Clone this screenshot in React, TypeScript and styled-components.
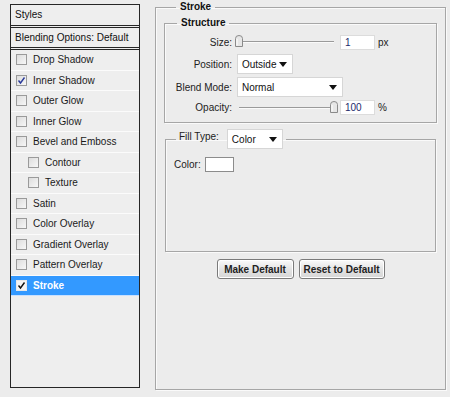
import React from 'react';
import styled, { createGlobalStyle } from 'styled-components';

const GlobalStyle = createGlobalStyle`
  html, body {
    margin: 0;
    padding: 0;
    background: #ececec;
  }
  body {
    font-family: 'Liberation Sans', Arial, sans-serif;
    font-size: 10px;
    color: #1e1e1e;
  }
`;

interface IEffect {
  name: string;
  checked?: boolean;
  indent?: boolean;
  selected?: boolean;
}

const effects: IEffect[] = [
  { name: 'Drop Shadow' },
  { name: 'Inner Shadow', checked: true },
  { name: 'Outer Glow' },
  { name: 'Inner Glow' },
  { name: 'Bevel and Emboss' },
  { name: 'Contour', indent: true },
  { name: 'Texture', indent: true },
  { name: 'Satin' },
  { name: 'Color Overlay' },
  { name: 'Gradient Overlay' },
  { name: 'Pattern Overlay' },
  { name: 'Stroke', checked: true, selected: true }
];

const CheckMark = ({ color }: { color: string }) => (
  <svg width="9" height="9" viewBox="0 0 9 9">
    <path d="M1.5 4.5 L3.5 7 L7.5 1.5" fill="none" stroke={color} strokeWidth="1.4" />
  </svg>
);

const Arrow = () => (
  <svg width="8" height="5" viewBox="0 0 8 5">
    <path d="M0 0 H8 L4 5 Z" fill="#111" />
  </svg>
);

const Thumb = () => (
  <svg width="8" height="12" viewBox="0 0 8 12">
    <path
      d="M0.5 3.5 Q0.5 0.5 4 0.5 Q7.5 0.5 7.5 3.5 V11.5 H0.5 Z"
      fill="#e6e6e6"
      stroke="#8a8a8a"
    />
    <path d="M2 4 V10.5" stroke="#fff" />
  </svg>
);

const Slider = ({ value }: { value: number }) => (
  <SliderTrack>
    <ThumbHolder style={{ left: `${value}%` }}>
      <Thumb />
    </ThumbHolder>
  </SliderTrack>
);

const App = () => {
  return (
    <Page>
      <GlobalStyle />
      <StylesPanel>
        <HeaderRow $height={20}>Styles</HeaderRow>
        <HeaderRow $height={19}>Blending Options: Default</HeaderRow>
        <EffectList>
          {effects.map(item => (
            <EffectRow key={item.name} $indent={item.indent} $selected={item.selected}>
              <CheckBox $selected={item.selected}>
                {item.checked && <CheckMark color={item.selected ? '#111' : '#2a3a9a'} />}
              </CheckBox>
              {item.name}
            </EffectRow>
          ))}
        </EffectList>
      </StylesPanel>

      <Group>
        <Legend>Stroke</Legend>
        <SubGroup>
          <Legend>Structure</Legend>
          <FormGrid>
            <Label>Size:</Label>
            <Control>
              <Slider value={0} />
              <NumberBox>1</NumberBox>
              <Unit>px</Unit>
            </Control>
            <Label>Position:</Label>
            <Control>
              <Select $width={56}>
                Outside
                <Arrow />
              </Select>
            </Control>
            <Label>Blend Mode:</Label>
            <Control>
              <Select $width={106}>
                Normal
                <Arrow />
              </Select>
            </Control>
            <Label>Opacity:</Label>
            <Control>
              <Slider value={100} />
              <NumberBox>100</NumberBox>
              <Unit>%</Unit>
            </Control>
          </FormGrid>
        </SubGroup>

        <FillGroup>
          <FillLegend>
            <span>Fill Type:</span>
            <Select $width={56}>
              Color
              <Arrow />
            </Select>
          </FillLegend>
          <FillBody>
            <span>Color:</span>
            <Swatch />
          </FillBody>
        </FillGroup>

        <ButtonRow>
          <Button $width={77}>Make Default</Button>
          <Button $width={86}>Reset to Default</Button>
        </ButtonRow>
      </Group>
    </Page>
  );
};

export default App;

const Page = styled.div`
  display: flex;
  align-items: flex-start;
  padding-left: 10px;
  column-gap: 15px;
  width: 450px;
  height: 397px;
  box-sizing: border-box;
`;

const StylesPanel = styled.div`
  margin-top: 4px;
  width: 130px;
  height: 384px;
  box-sizing: border-box;
  border: 1px solid #262626;
  background: #eeeeee;
  display: flex;
  flex-direction: column;
`;

const HeaderRow = styled.div<{ $height: number }>`
  height: ${p => p.$height}px;
  line-height: ${p => p.$height}px;
  padding-left: 4px;
  border-bottom: 3px double #262626;
  font-size: 10px;
  color: #111;
`;

const EffectList = styled.div`
  display: flex;
  flex-direction: column;
  flex: 1;
`;

const EffectRow = styled.div<{ $indent?: boolean; $selected?: boolean }>`
  height: 19.5px;
  display: flex;
  align-items: center;
  column-gap: 6px;
  padding-left: ${p => (p.$indent ? '17px' : '5px')};
  border-bottom: 1px solid ${p => (p.$selected ? '#c8e0ff' : '#fbfbfb')};
  background: ${p => (p.$selected ? '#3399ff' : 'transparent')};
  color: ${p => (p.$selected ? '#ffffff' : '#1a1a1a')};
  font-weight: ${p => (p.$selected ? 'bold' : 'normal')};
  font-size: 10px;
`;

const CheckBox = styled.span<{ $selected?: boolean }>`
  width: 11px;
  height: 11px;
  box-sizing: border-box;
  border: 1px solid ${p => (p.$selected ? '#e8e8e8' : '#9a9a9a')};
  background: ${p =>
    p.$selected ? '#f4f4f4' : 'linear-gradient(135deg, #dcdcdc, #f7f7f7)'};
  display: flex;
  align-items: center;
  justify-content: center;
`;

const Group = styled.fieldset`
  margin: 0;
  padding: 2px 8px 110px 8px;
  width: 291px;
  box-sizing: border-box;
  border: 1px solid #a6a6a6;
  box-shadow: inset 1px 1px 0 #fafafa, 1px 1px 0 #fafafa;
  min-inline-size: 0;
`;

const Legend = styled.legend`
  padding: 0 4px;
  margin-left: 12px;
  line-height: 14px;
  font-weight: bold;
  font-size: 10px;
  color: #111;
`;

const SubGroup = styled.fieldset`
  margin: 0;
  padding: 3px 0 4px 0;
  border: 1px solid #a6a6a6;
  box-shadow: inset 1px 1px 0 #fafafa, 1px 1px 0 #fafafa;
  min-inline-size: 0;
`;

const FormGrid = styled.div`
  display: grid;
  grid-template-columns: 67px 1fr;
  grid-template-rows: 18px 20px 20px 18px;
  row-gap: 3px;
  column-gap: 5px;
  & > :nth-child(7),
  & > :nth-child(8) {
    margin-top: -3px;
  }
`;

const Label = styled.span`
  text-align: right;
  align-self: center;
  color: #222;
  font-size: 10px;
`;

const Control = styled.div`
  display: flex;
  align-items: center;
`;

const SliderTrack = styled.div`
  position: relative;
  width: 95px;
  height: 1px;
  margin-left: 2px;
  background: #9a9a9a;
  border-bottom: 1px solid #fafafa;
`;

const ThumbHolder = styled.div`
  position: absolute;
  top: -6px;
  margin-left: -4px;
  line-height: 0;
`;

const NumberBox = styled.div`
  margin-left: 6px;
  width: 35px;
  height: 15px;
  box-sizing: border-box;
  background: #fff;
  border: 1px solid #dcdcdc;
  padding-left: 4px;
  line-height: 13px;
  color: #1d2a6b;
  font-size: 10px;
`;

const Unit = styled.span`
  margin-left: 3px;
  color: #222;
`;

const Select = styled.div<{ $width: number }>`
  width: ${p => p.$width}px;
  height: 20px;
  box-sizing: border-box;
  background: #fff;
  border: 1px solid #d6d6d6;
  display: flex;
  align-items: center;
  justify-content: space-between;
  padding: 0 5px 0 4px;
  font-size: 10px;
  color: #111;
  font-weight: normal;
`;

const FillGroup = styled.fieldset`
  margin: 6px 1px 0 1px;
  padding: 0;
  border: 1px solid #a6a6a6;
  box-shadow: inset 1px 1px 0 #fafafa, 1px 1px 0 #fafafa;
  min-inline-size: 0;
`;

const FillLegend = styled.legend`
  margin-left: 10px;
  padding: 0 3px;
  display: flex;
  align-items: center;
  column-gap: 8px;
  font-size: 10px;
  color: #222;
  span {
    margin-top: -6px;
  }
`;

const FillBody = styled.div`
  height: 102px;
  box-sizing: border-box;
  padding: 8px 0 0 8px;
  display: flex;
  align-items: flex-start;
  column-gap: 4px;
  color: #222;
  span {
    line-height: 15px;
  }
`;

const Swatch = styled.div`
  width: 29px;
  height: 15px;
  box-sizing: border-box;
  background: #fff;
  border: 1px solid #8c8c8c;
`;

const ButtonRow = styled.div`
  margin-top: 7px;
  display: flex;
  justify-content: center;
  column-gap: 5px;
`;

const Button = styled.div<{ $width: number }>`
  width: ${p => p.$width}px;
  height: 20px;
  box-sizing: border-box;
  border: 1px solid #7a7a7a;
  border-radius: 3px;
  background: linear-gradient(#fbfbfb, #e2e2e2 55%, #d6d6d6);
  box-shadow: inset 0 0 0 1px #fff;
  display: flex;
  align-items: center;
  justify-content: center;
  font-weight: bold;
  font-size: 10px;
  color: #222;
`;
